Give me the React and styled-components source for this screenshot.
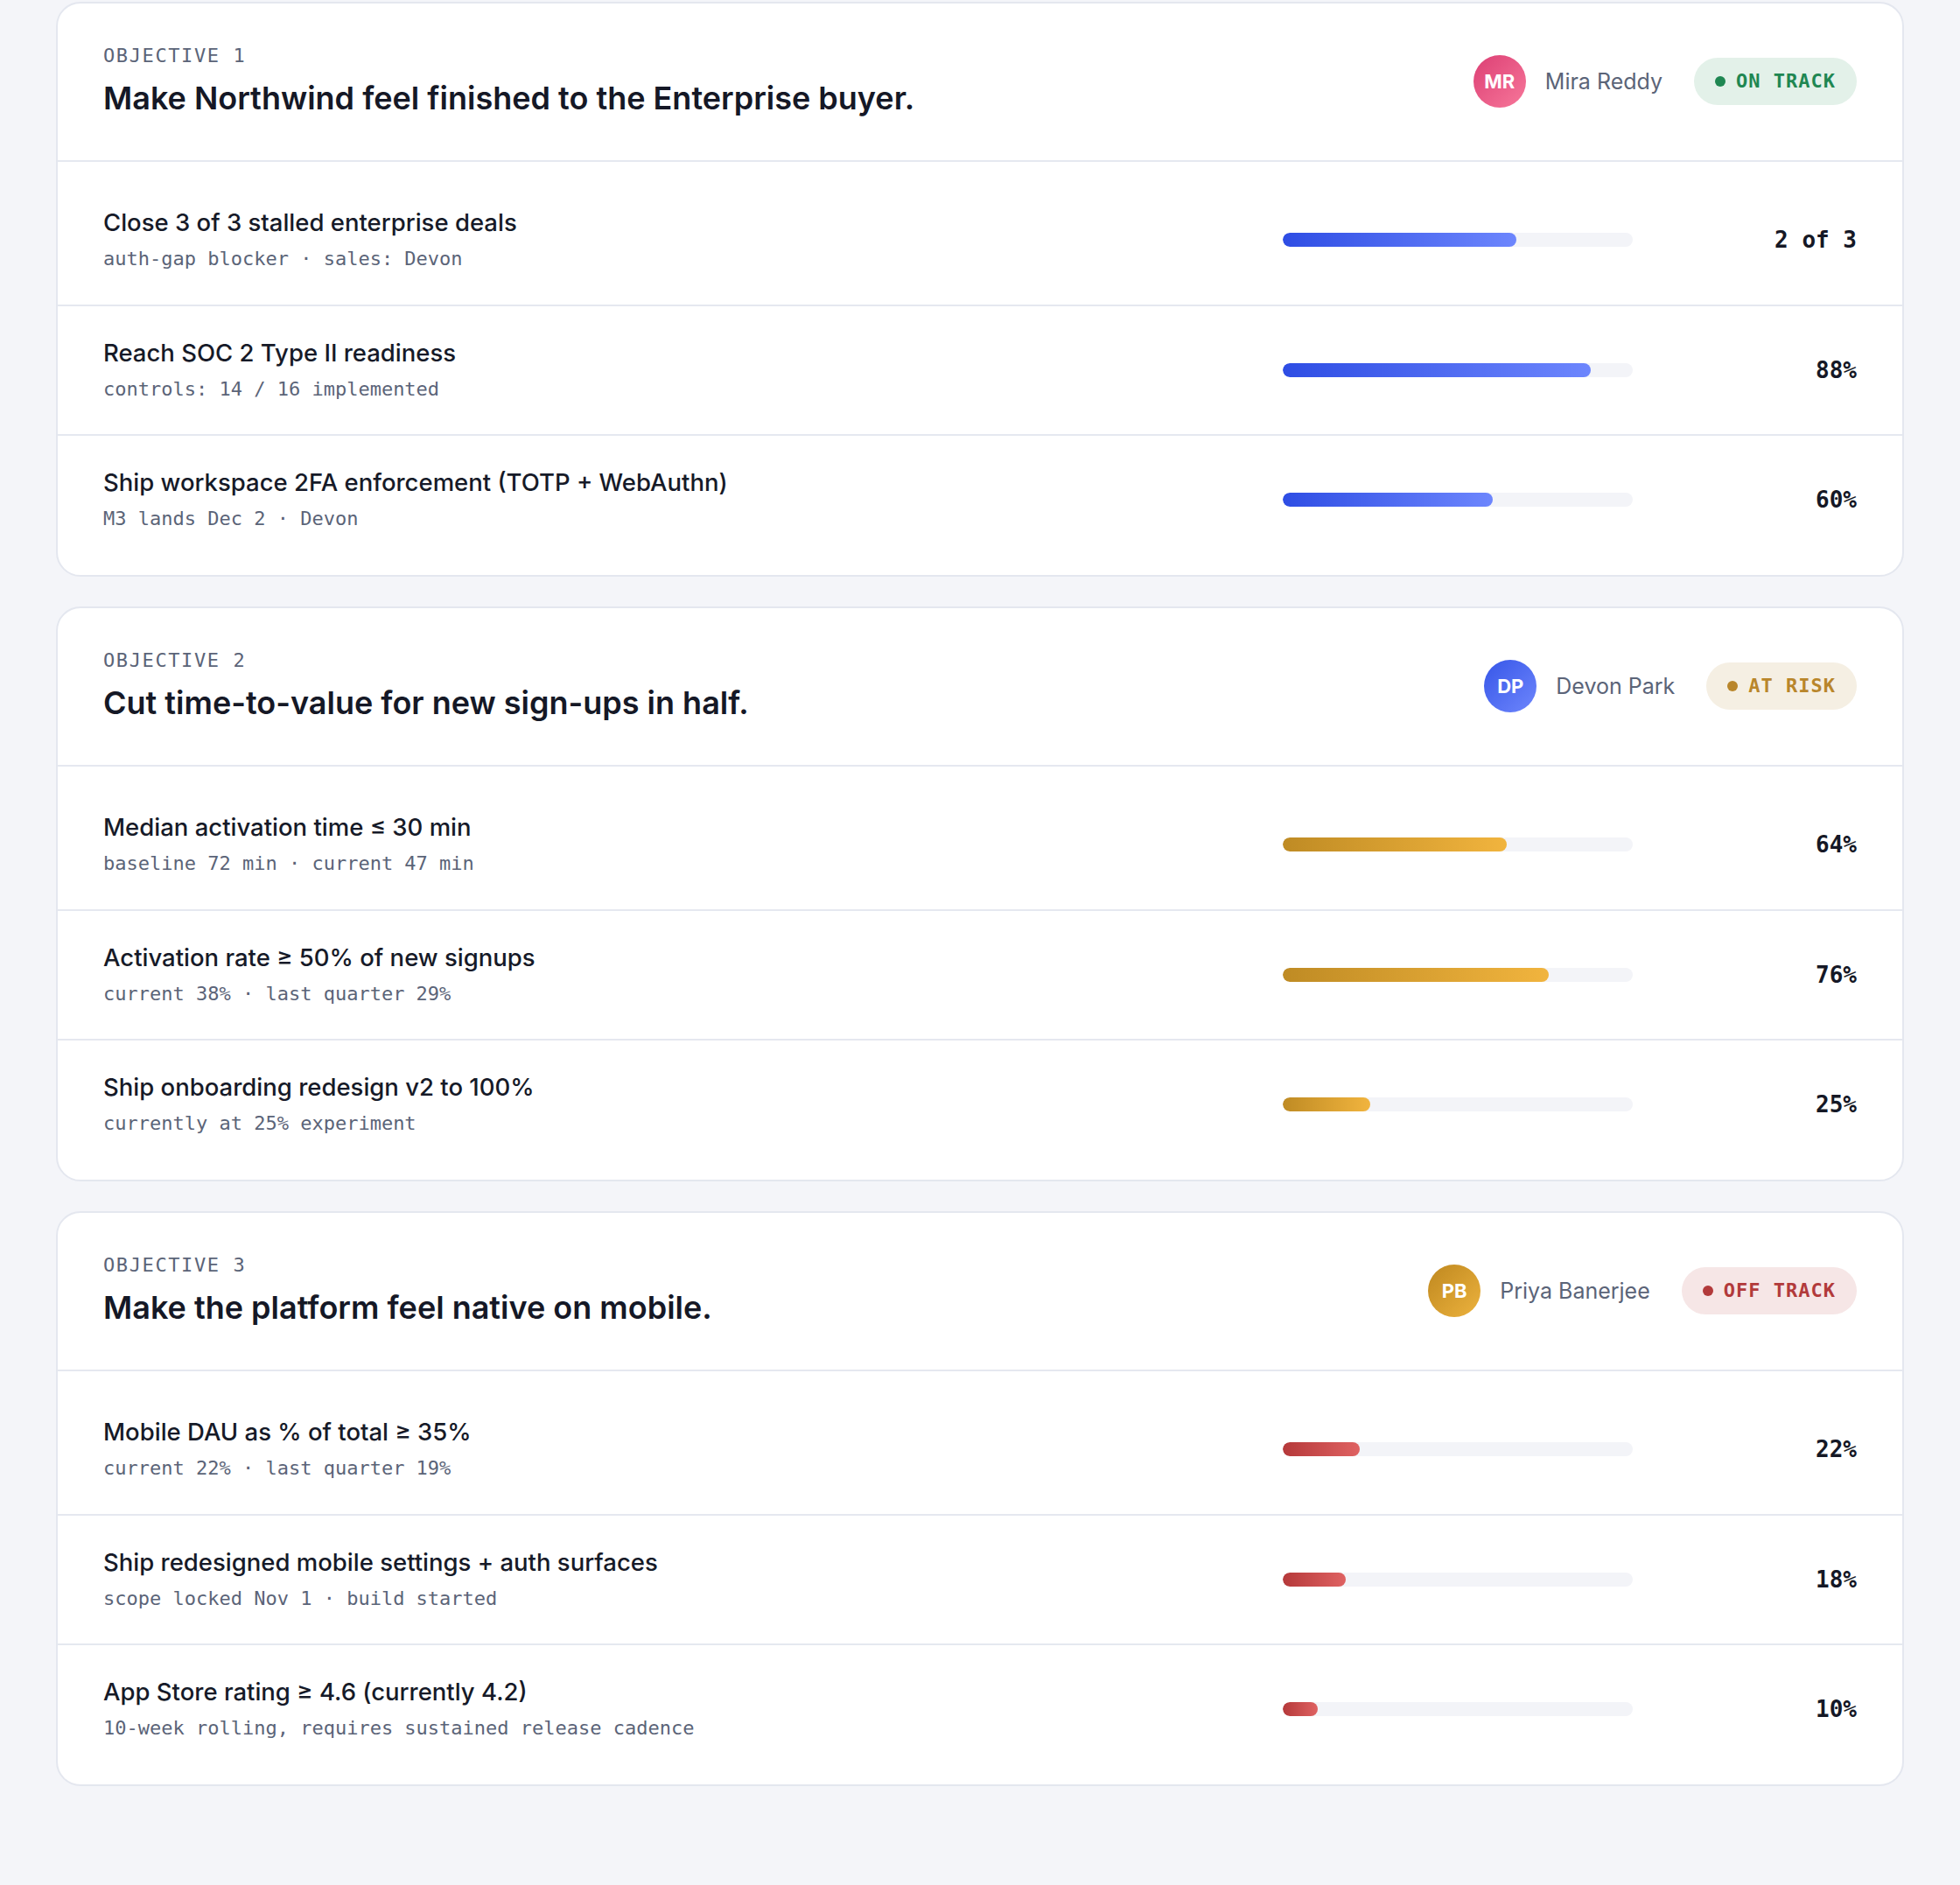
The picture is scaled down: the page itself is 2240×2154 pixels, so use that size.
import React from "react";
import styled, { createGlobalStyle } from "styled-components";

const GlobalStyle = createGlobalStyle`
  html, body {
    margin: 0;
    padding: 0;
    background: #f4f5f9;
  }
  body {
    font-family: Inter, "Noto Sans", sans-serif;
    color: #151826;
    min-height: 100vh;
  }
`;

const TONES = {
  on: {
    label: "ON TRACK",
    pillBg: "#e3f1e9",
    pillFg: "#1f8752",
    bar: "linear-gradient(90deg, #2e4de4 0%, #6d86fd 100%)",
  },
  risk: {
    label: "AT RISK",
    pillBg: "#f5efe3",
    pillFg: "#b9862b",
    bar: "linear-gradient(90deg, #bf8b24 0%, #f1b43e 100%)",
  },
  off: {
    label: "OFF TRACK",
    pillBg: "#f6e6e6",
    pillFg: "#b23a3b",
    bar: "linear-gradient(90deg, #b5393a 0%, #df6262 100%)",
  },
};

const AVATARS = {
  pink: "linear-gradient(135deg, #dc3f74 0%, #f7779a 100%)",
  blue: "linear-gradient(135deg, #3656e8 0%, #6e86fc 100%)",
  gold: "linear-gradient(135deg, #bf881f 0%, #ecb23e 100%)",
};

const objectives = [
  {
    id: 1,
    title: "Make Northwind feel finished to the Enterprise buyer.",
    owner: "Mira Reddy",
    initials: "MR",
    avatar: "pink",
    tone: "on",
    krs: [
      { title: "Close 3 of 3 stalled enterprise deals", meta: "auth-gap blocker · sales: Devon", pct: 66.7, value: "2 of 3" },
      { title: "Reach SOC 2 Type II readiness", meta: "controls: 14 / 16 implemented", pct: 88, value: "88%" },
      { title: "Ship workspace 2FA enforcement (TOTP + WebAuthn)", meta: "M3 lands Dec 2 · Devon", pct: 60, value: "60%" },
    ],
  },
  {
    id: 2,
    title: "Cut time-to-value for new sign-ups in half.",
    owner: "Devon Park",
    initials: "DP",
    avatar: "blue",
    tone: "risk",
    krs: [
      { title: "Median activation time ≤ 30 min", meta: "baseline 72 min · current 47 min", pct: 64, value: "64%" },
      { title: "Activation rate ≥ 50% of new signups", meta: "current 38% · last quarter 29%", pct: 76, value: "76%" },
      { title: "Ship onboarding redesign v2 to 100%", meta: "currently at 25% experiment", pct: 25, value: "25%" },
    ],
  },
  {
    id: 3,
    title: "Make the platform feel native on mobile.",
    owner: "Priya Banerjee",
    initials: "PB",
    avatar: "gold",
    tone: "off",
    krs: [
      { title: "Mobile DAU as % of total ≥ 35%", meta: "current 22% · last quarter 19%", pct: 22, value: "22%" },
      { title: "Ship redesigned mobile settings + auth surfaces", meta: "scope locked Nov 1 · build started", pct: 18, value: "18%" },
      { title: "App Store rating ≥ 4.6 (currently 4.2)", meta: "10-week rolling, requires sustained release cadence", pct: 10, value: "10%" },
    ],
  },
];

const MONO = `"DejaVu Sans Mono", "Liberation Mono", monospace`;

const Page = styled.div`
  padding: 2px 64px 64px;
  display: flex;
  flex-direction: column;
  gap: 34px;
`;

const Card = styled.section`
  background: #ffffff;
  border: 2px solid #e4e7ef;
  border-radius: 28px;
  overflow: hidden;
`;

const Header = styled.header`
  display: flex;
  align-items: center;
  justify-content: space-between;
  padding: 47px 52px 49px;
  border-bottom: 2px solid #e5e8f0;
`;

const HeadText = styled.div`
  display: flex;
  flex-direction: column;
  gap: 15px;
`;

const Eyebrow = styled.div`
  font-family: ${MONO};
  font-size: 22px;
  letter-spacing: 1.6px;
  color: #5b6478;
`;

const Title = styled.h2`
  margin: 0;
  font-size: 36px;
  line-height: 1.2;
  font-weight: 600;
  color: #151826;
`;

const HeadMeta = styled.div`
  display: flex;
  align-items: center;
`;

const Owner = styled.div`
  display: flex;
  align-items: center;
  gap: 22px;
  margin-right: 36px;
`;

const Avatar = styled.div`
  width: 60px;
  height: 60px;
  border-radius: 50%;
  background: ${(p) => AVATARS[p.$kind]};
  color: #fff;
  display: flex;
  align-items: center;
  justify-content: center;
  font-size: 22px;
  font-weight: 700;
`;

const OwnerName = styled.span`
  font-size: 25px;
  color: #5b6478;
`;

const Pill = styled.div`
  display: flex;
  align-items: center;
  gap: 12px;
  height: 54px;
  padding: 0 24px;
  border-radius: 27px;
  background: ${(p) => TONES[p.$tone].pillBg};
  color: ${(p) => TONES[p.$tone].pillFg};
  font-family: ${MONO};
  font-size: 22px;
  font-weight: 700;
  letter-spacing: 1px;
`;

const Dot = styled.span`
  width: 12px;
  height: 12px;
  border-radius: 50%;
  background: currentColor;
`;

const List = styled.div`
  padding: 16px 0 12px;
`;

const Row = styled.div`
  display: grid;
  grid-template-columns: 1fr 400px 200px;
  column-gap: 56px;
  align-items: center;
  padding: 36px 52px 37px;
  & + & {
    border-top: 2px solid #e5e8f0;
  }
`;

const KrText = styled.div`
  display: flex;
  flex-direction: column;
  gap: 10px;
`;

const KrTitle = styled.div`
  font-size: 27.5px;
  line-height: 35px;
  font-weight: 500;
  color: #161a28;
`;

const KrMeta = styled.div`
  font-family: ${MONO};
  font-size: 22px;
  line-height: 1.3;
  color: #5b6478;
`;

const Track = styled.div`
  height: 16px;
  border-radius: 8px;
  background: #f3f4f8;
  overflow: hidden;
`;

const Fill = styled.div`
  height: 100%;
  border-radius: 8px;
  background: ${(p) => TONES[p.$tone].bar};
`;

const Value = styled.div`
  text-align: right;
  font-family: ${MONO};
  font-size: 26px;
  font-weight: 700;
  color: #151826;
`;

function Objective({ obj }) {
  return (
    <Card>
      <Header>
        <HeadText>
          <Eyebrow>OBJECTIVE {obj.id}</Eyebrow>
          <Title>{obj.title}</Title>
        </HeadText>
        <HeadMeta>
          <Owner>
            <Avatar $kind={obj.avatar}>{obj.initials}</Avatar>
            <OwnerName>{obj.owner}</OwnerName>
          </Owner>
          <Pill $tone={obj.tone}>
            <Dot />
            {TONES[obj.tone].label}
          </Pill>
        </HeadMeta>
      </Header>
      <List>
        {obj.krs.map((kr) => (
          <Row key={kr.title}>
            <KrText>
              <KrTitle>{kr.title}</KrTitle>
              <KrMeta>{kr.meta}</KrMeta>
            </KrText>
            <Track>
              <Fill $tone={obj.tone} style={{ width: `${kr.pct}%` }} />
            </Track>
            <Value>{kr.value}</Value>
          </Row>
        ))}
      </List>
    </Card>
  );
}

export default function App() {
  return (
    <>
      <GlobalStyle />
      <Page>
        {objectives.map((obj) => (
          <Objective key={obj.id} obj={obj} />
        ))}
      </Page>
    </>
  );
}
